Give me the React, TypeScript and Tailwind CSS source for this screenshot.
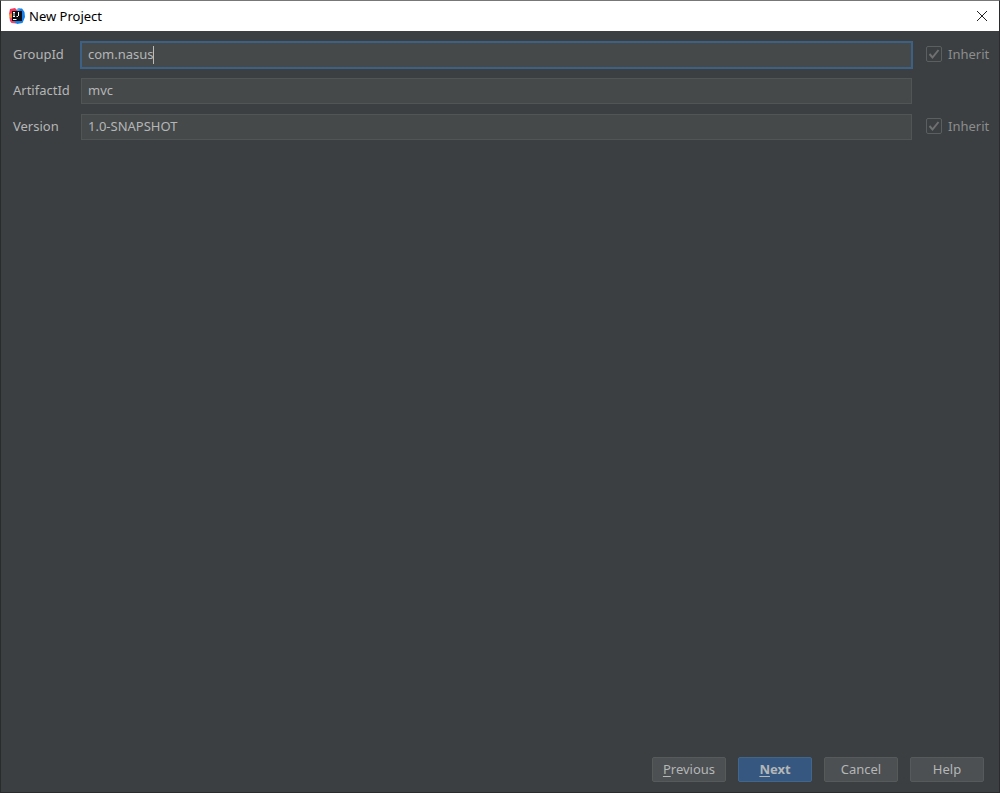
import { useState } from 'react'
import clsx from 'clsx'

interface FieldProps {
  id: string
  label: string
  initial: string
  focused?: boolean
  inherit?: boolean
}

const Logo = () => {
  return (
    <svg className="h-4 w-4" viewBox="0 0 16 16" aria-hidden="true">
      <path d="M1 1 6 0 9 3 5 9 0 6.500z" fill="#f5365c" />
      <path d="M0 6 4 5v7L.5 10z" fill="#f98a3c" />
      <path d="M.5 9.500 4 10l4 3-1 2.500-4.500-.5L1 13z" fill="#e8456f" />
      <path d="M8.500 .5 13 .5 15.500 4 16 9l-2.500 6L8 16l-2.500-2L9 5z" fill="#1781e8" />
      <path d="M9 .5 11 0l-1 4H7z" fill="#5aa7f0" />
      <rect x="3" y="3" width="10" height="10" fill="#0b0d12" />
      <path d="M4 4.500h2M5 4.500v4M4 8.500h2M9.500 4v4" fill="none" stroke="#fff" />
      <path d="M7.500 8.500H9" stroke="#fff" />
      <path d="M4 11.500h3.500" stroke="#fff" />
    </svg>
  )
}

const Inherit = ({ id }: { id: string }) => {
  return (
    <label htmlFor={id} className="flex items-center gap-1.5 text-[#8b8d8e]">
      <span className="relative flex h-4 w-4">
        <input id={id} type="checkbox" defaultChecked disabled className="peer h-4 w-4 appearance-none rounded-xs border border-[#5c5f60]" />
        <svg className="absolute inset-0 hidden h-4 w-4 peer-checked:block" viewBox="0 0 16 16" fill="none" stroke="#6e7071" strokeWidth="2">
          <path d="M3.500 8 6.500 11.500 12.500 4" />
        </svg>
      </span>
      Inherit
    </label>
  )
}

const Field = ({ id, label, initial, focused, inherit }: FieldProps) => {
  const [value, setValue] = useState(initial)

  return (
    <>
      <label htmlFor={id} className="pb-0.5">{label}</label>
      <div className="relative">
        <input
          id={id}
          value={value}
          onChange={(e) => setValue(e.target.value)}
          className={clsx(
            'block h-[26px] w-full border bg-[#45494a] px-1.5 pb-0.5 outline-none',
            focused ? 'border-[#3d6185] caret-transparent ring-1 ring-[#3d6185]' : 'border-[#515556]'
          )}
        />
        {focused && <span className="absolute top-1 left-[72px] h-[18px] w-px bg-[#bbbbbb]"></span>}
      </div>
      <div className="pb-0.5 pl-3.5">{inherit && <Inherit id={`${id}-inherit`} />}</div>
    </>
  )
}

interface DialogButtonProps {
  text: string
  mnemonic?: boolean
  primary?: boolean
}

const DialogButton = ({ text, mnemonic, primary }: DialogButtonProps) => {
  return (
    <button
      type="button"
      className={clsx(
        'h-[25px] w-[74px] rounded-xs border pb-px text-center',
        primary ? 'border-[#41668b] bg-[#365880] font-bold' : 'border-[#565a5b] bg-[#4c5052]'
      )}
    >
      {mnemonic ? (
        <>
          <span className="underline underline-offset-2">{text[0]}</span>
          {text.slice(1)}
        </>
      ) : (
        text
      )}
    </button>
  )
}

const App = () => {
  return (
    <div className="flex min-h-screen flex-col border border-t-[#777777] border-r-[#292b2c] border-b-[#292b2c] border-l-[#292b2c] bg-[#3c3f41] font-['Noto_Sans',sans-serif] text-[13px] leading-4 text-[#b4b6b7]">
      <header className="flex h-[30px] items-center bg-white pr-[11px] pl-2 text-black">
        <Logo />
        <h1 className="ml-1 flex-1">New Project</h1>
        <button type="button" aria-label="Close">
          <svg className="h-3 w-3" viewBox="0 0 12 12" stroke="#222222" fill="none">
            <path d="M1 1l10 10M11 1 1 11" />
          </svg>
        </button>
      </header>
      <form className="flex flex-1 flex-col">
        <div className="grid grid-cols-[68px_1fr_75px] items-center gap-y-2.5 px-3 pt-[11px]">
          <Field id="groupId" label="GroupId" initial="com.nasus" focused inherit />
          <Field id="artifactId" label="ArtifactId" initial="mvc" />
          <Field id="version" label="Version" initial="1.0-SNAPSHOT" inherit />
        </div>
        <footer className="mt-auto flex justify-end gap-3 pr-[15px] pb-2.5">
          <DialogButton text="Previous" mnemonic />
          <DialogButton text="Next" mnemonic primary />
          <DialogButton text="Cancel" />
          <DialogButton text="Help" />
        </footer>
      </form>
    </div>
  )
}

export default App
